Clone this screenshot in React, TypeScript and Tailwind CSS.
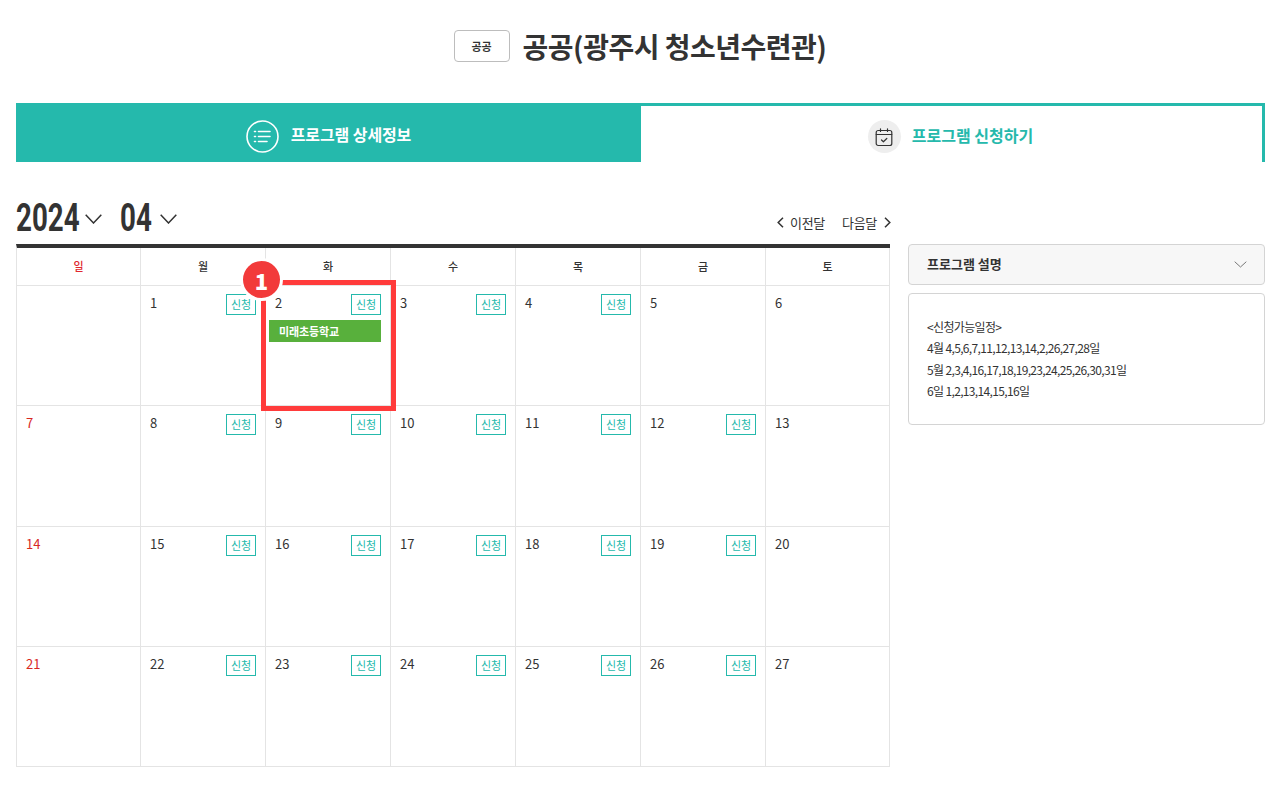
import React from "react";

const font = { fontFamily: '"Noto Sans CJK KR", "Noto Sans", sans-serif' };
const days = ["일", "월", "화", "수", "목", "금", "토"];
const weeks: (number | null)[][] = [
  [null, 1, 2, 3, 4, 5, 6],
  [7, 8, 9, 10, 11, 12, 13],
  [14, 15, 16, 17, 18, 19, 20],
  [21, 22, 23, 24, 25, 26, 27],
];

function Chevron({ w, h, color, sw }: { w: number; h: number; color: string; sw: number }) {
  return (
    <svg width={w} height={h} viewBox={`0 0 ${w} ${h}`} fill="none" stroke={color} strokeWidth={sw}>
      <path d={`M0.7 0.7L${w / 2} ${h - 1}L${w - 0.7} 0.7`} />
    </svg>
  );
}

function Cell({ d, col }: { d: number | null; col: number }) {
  const canApply = d !== null && col > 0 && col < 6 && d !== 5;
  return (
    <div className="relative h-[120.35px] border-r border-b border-[#e4e4e4] px-[9px] pt-[7px]">
      {d !== null && (
        <span className={`block text-[13px] leading-[20px] ${col === 0 ? "text-[#d8281f]" : "text-[#333333]"}`}>{d}</span>
      )}
      {canApply && (
        <span className="absolute right-[9px] top-[8px] flex h-[21px] w-[30px] items-center justify-center border border-[#25b9ac] text-[11px] leading-none text-[#25b9ac]">
          신청
        </span>
      )}
      {d === 2 && (
        <div className="absolute left-[3px] right-[9px] top-[34px] flex h-[22px] items-center bg-[#58b03c] pl-[10px] text-[11px] font-bold tracking-[-0.1px] text-white">
          미래초등학교
        </div>
      )}
    </div>
  );
}

export default function App() {
  return (
    <div className="min-h-[789px] bg-white px-4 pt-[30px]" style={font}>
      <div className="flex h-[32px] items-center justify-center gap-[13px]">
        <span className="flex h-[32px] w-[56px] items-center justify-center rounded-[4px] border border-[#bdbdbd] text-[11px] font-bold text-[#333333]">
          공공
        </span>
        <h1 className="text-[28px] font-bold leading-[32px] tracking-[-0.5px] text-[#333333]">공공(광주시 청소년수련관)</h1>
      </div>

      <div className="mt-[41px] flex h-[59px] w-[1249px]">
        <div className="flex w-[625px] shrink-0 items-center justify-center gap-[12px] bg-[#25b9ac] pt-[7px] text-[16px] font-bold tracking-[-0.1px] text-white">
          <svg width="33" height="33" viewBox="0 0 33 33" fill="none" stroke="white">
            <circle cx="16.5" cy="16.5" r="15.5" strokeWidth="1.6" />
            <path d="M12.5 11.5H24M12.5 16.5H24M12.5 21.5H21" strokeWidth="1.6" strokeLinecap="round" />
            <path d="M8.5 11.5H9.5M8.5 16.5H9.5M8.5 21.5H9.5" strokeWidth="1.6" strokeLinecap="round" />
          </svg>
          <span className="mb-[4px]">프로그램 상세정보</span>
        </div>
        <div className="flex flex-1 items-center justify-center gap-[11px] border-t-[3px] border-r-[3px] border-[#25b9ac] pr-[2px] pt-[5px] text-[16px] font-bold text-[#25b9ac]">
          <span className="flex h-[33px] w-[33px] items-center justify-center rounded-full bg-[#eeeeee]">
            <svg width="20" height="20" viewBox="0 0 20 20" fill="none" stroke="#333333" strokeWidth="1.2" strokeLinecap="round" strokeLinejoin="round">
              <rect x="2.2" y="3.5" width="15.6" height="15" rx="2" />
              <path d="M2.2 7.5H17.8M6.5 1.8V4.5M13.5 1.8V4.5M7.5 13L9.4 14.8L12.8 11.5" />
            </svg>
          </span>
          <span className="mb-[4px]">프로그램 신청하기</span>
        </div>
      </div>

      <div className="mt-[39px] flex w-[1249px] items-start">
        <div className="w-[874px] shrink-0">
          <div className="flex h-[43px] items-start justify-between">
            <div className="flex items-center text-[#333333]">
              <span className="inline-block w-[63px] origin-left scale-x-[0.71] text-[39px] font-bold leading-[34px]" style={{ fontFamily: '"Roboto", sans-serif' }}>2024</span>
              <span className="ml-[6px] mt-[1px]"><Chevron w={17} h={10} color="#333333" sw={1.5} /></span>
              <span className="ml-[18px] inline-block w-[33px] origin-left scale-x-[0.71] text-[39px] font-bold leading-[34px]" style={{ fontFamily: '"Roboto", sans-serif' }}>04</span>
              <span className="ml-[7px] mt-[1px]"><Chevron w={17} h={10} color="#333333" sw={1.5} /></span>
            </div>
            <div className="-mr-[1px] mt-[12px] flex items-center text-[13px] tracking-[-0.3px] text-[#333333]">
              <svg width="7" height="11" viewBox="0 0 7 11" fill="none" stroke="#333333" strokeWidth="1.5"><path d="M6 0.8L1.2 5.5L6 10.2" /></svg>
              <span className="ml-[6px]">이전달</span>
              <span className="ml-[17px]">다음달</span>
              <svg className="ml-[7px]" width="7" height="11" viewBox="0 0 7 11" fill="none" stroke="#333333" strokeWidth="1.5"><path d="M1 0.8L5.8 5.5L1 10.2" /></svg>
            </div>
          </div>

          <div className="relative border-t-4 border-l border-[#333333] border-l-[#e4e4e4]">
            <div className="grid grid-cols-[124px_repeat(5,125px)_124px]">
              {days.map((d, i) => (
                <div
                  key={d}
                  className={`flex h-[38px] items-center justify-center border-r border-b border-[#e4e4e4] pb-[1px] text-[11px] font-medium ${i === 0 ? "text-[#e0282e]" : "text-[#333333]"}`}
                >
                  {d}
                </div>
              ))}
              {weeks.flat().map((d, i) => (
                <Cell key={i} d={d} col={i % 7} />
              ))}
            </div>
            <div className="absolute left-[244px] top-[32px] h-[131px] w-[135px] border-[5px] border-[#ff3b3b]" />
            <div className="absolute left-[223px] top-[10px] flex h-[43px] w-[43px] items-center justify-center rounded-full border-[3px] border-white bg-[#f23a3a] text-[22px] font-black leading-none text-white">
              1
            </div>
          </div>
        </div>

        <div className="ml-[18px] mt-[43px] w-[357px] shrink-0">
          <div className="flex h-[41px] items-center justify-between rounded-[4px] border border-[#d4d4d4] bg-[#f7f7f7] pb-[2px] pl-[18px] pr-[17px] text-[13px] font-bold text-[#333333]">
            프로그램 설명
            <span className="mt-[2px]"><Chevron w={13} h={7} color="#777777" sw={1} /></span>
          </div>
          <div className="mt-[8px] h-[132px] rounded-[4px] border border-[#d4d4d4] px-[18px] pt-[22px] text-[12px] leading-[21.4px] tracking-[-0.65px] text-[#333333]">
            <p>&lt;신청가능일정&gt;</p>
            <p>4월 4,5,6,7,11,12,13,14,2,26,27,28일</p>
            <p>5월 2,3,4,16,17,18,19,23,24,25,26,30,31일</p>
            <p>6일 1,2,13,14,15,16일</p>
          </div>
        </div>
      </div>
    </div>
  );
}
